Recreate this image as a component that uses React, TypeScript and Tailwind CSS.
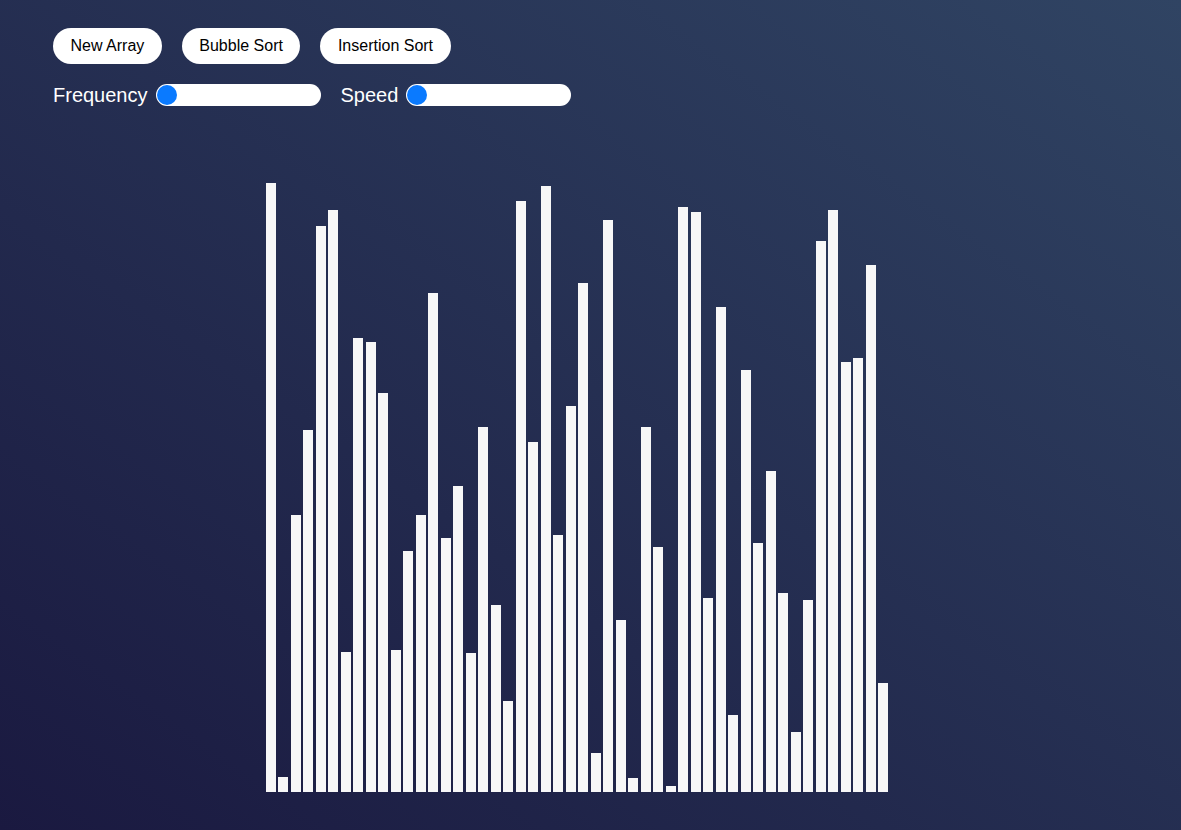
import React from "react";

const heights = [
  609, 15, 277, 362, 566, 582, 140, 454, 450, 399, 142, 241, 277, 499, 254,
  306, 139, 365, 187, 91, 591, 350, 606, 257, 386, 509, 39, 572, 172, 14, 365,
  245, 6, 585, 580, 194, 485, 77, 422, 249, 321, 199, 60, 192, 551, 582, 430,
  434, 527, 109,
];

const Slider = () => (
  <div className="relative h-[22px] w-[165px] rounded-full bg-white">
    <div className="absolute left-[1px] top-[1px] h-[20px] w-[20px] rounded-full bg-[#0a7aff]" />
  </div>
);

const Button = ({ label }: { label: string }) => (
  <button className="h-[36px] rounded-full bg-white px-[17.5px] text-[16px] text-black">
    {label}
  </button>
);

export default function App() {
  return (
    <div
      className="h-[830px] w-full overflow-hidden bg-gradient-to-tr from-[#1a1940] to-[#304463] pl-[53px] pt-[28px]"
      style={{ fontFamily: '"Liberation Sans", Arial, sans-serif' }}
    >
      <div className="flex gap-5">
        <Button label="New Array" />
        <Button label="Bubble Sort" />
        <Button label="Insertion Sort" />
      </div>
      <div className="mt-[16px] flex items-center text-[20px] text-white">
        <span className="mr-[8px]">Frequency</span>
        <Slider />
        <span className="ml-[20px] mr-[8px]">Speed</span>
        <Slider />
      </div>
      <div className="ml-[212.5px] mt-[62px] flex h-[620px] items-end">
        {heights.map((h, i) => (
          <div
            key={i}
            className="mr-[2.5px] w-[10px] shrink-0 bg-[#f7f7f7]"
            style={{ height: h }}
          />
        ))}
      </div>
    </div>
  );
}
